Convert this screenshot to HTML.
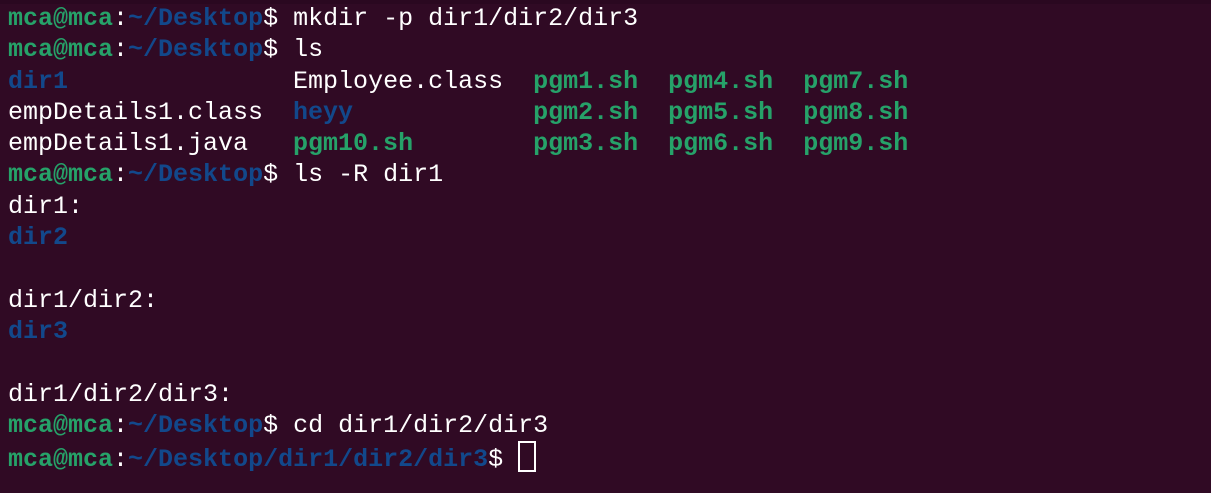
<!DOCTYPE html>
<html><head><style>
html,body{margin:0;padding:0;background:#300a24;width:1211px;height:493px;overflow:hidden}
.top{position:absolute;left:0;top:0;width:1211px;height:4px;background:#2a0820}
pre{position:absolute;left:8px;top:3px;margin:0;font-family:"Liberation Mono",monospace;font-size:25px;line-height:31.3px;color:#ffffff}
.g{color:#26a269;font-weight:bold}
.b{color:#12488b;font-weight:bold}
.c{display:inline-block;width:14px;height:27px;border:2px solid #fff;vertical-align:-6px}
</style></head><body><div class="top"></div>
<pre><span class="g">mca@mca</span>:<span class="b">~/Desktop</span>$ mkdir -p dir1/dir2/dir3
<span class="g">mca@mca</span>:<span class="b">~/Desktop</span>$ ls
<span class="b">dir1</span>               Employee.class  <span class="g">pgm1.sh</span>  <span class="g">pgm4.sh</span>  <span class="g">pgm7.sh</span>
empDetails1.class  <span class="b">heyy</span>            <span class="g">pgm2.sh</span>  <span class="g">pgm5.sh</span>  <span class="g">pgm8.sh</span>
empDetails1.java   <span class="g">pgm10.sh</span>        <span class="g">pgm3.sh</span>  <span class="g">pgm6.sh</span>  <span class="g">pgm9.sh</span>
<span class="g">mca@mca</span>:<span class="b">~/Desktop</span>$ ls -R dir1
dir1:
<span class="b">dir2</span>

dir1/dir2:
<span class="b">dir3</span>

dir1/dir2/dir3:
<span class="g">mca@mca</span>:<span class="b">~/Desktop</span>$ cd dir1/dir2/dir3
<span class="g">mca@mca</span>:<span class="b">~/Desktop/dir1/dir2/dir3</span>$ <span class="c"></span></pre>
</body></html>
